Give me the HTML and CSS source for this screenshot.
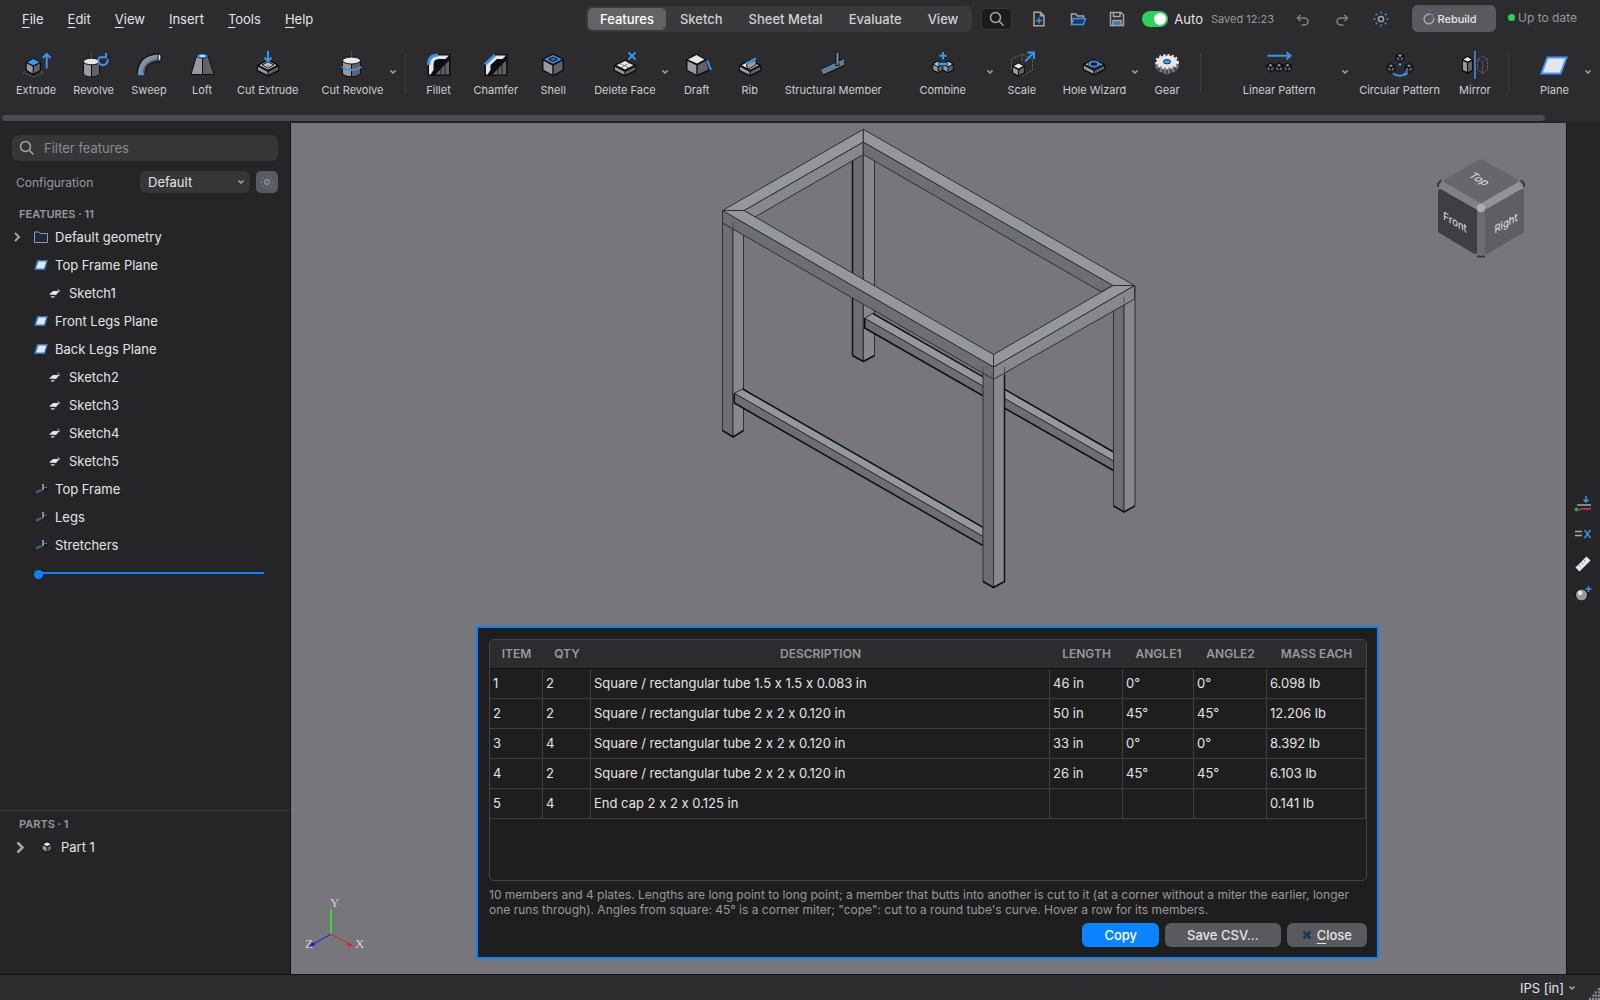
FILE: index.html
```html
<!DOCTYPE html>
<html lang="en">
<head>
  <meta charset="UTF-8">
  <title>Part Studio</title>
  <link rel="stylesheet" href="styles.css">
</head>
<body>

<!-- shared icon shapes -->
<svg class="symbols" aria-hidden="true">
  <symbol id="cube" viewBox="0 0 16 16">
    <path class="dark" d="M8 0 15 4v8l-7 4-7-4V4z"/>
    <path class="white" d="M8 1.500 13 4.300 8 7 3 4.300z"/>
    <path class="light" d="M2.200 5.600 7.400 8.400v5.800l-5.200-3z"/>
    <path class="mid" d="M13.800 5.600 8.600 8.400v5.800l5.200-3z"/>
  </symbol>
  <symbol id="cube-dim" viewBox="0 0 16 16">
    <path class="dark" d="M8 0 15 4v8l-7 4-7-4V4z"/>
    <path class="light" d="M8 2.500 11.500 4.500 8 6.500 4.500 4.500z"/>
    <path class="mid" d="M3 6.600 7 8.800v4.800L3 11.200z"/>
    <path class="mid" d="M13 6.600 9 8.800v4.800l4-2.400z"/>
  </symbol>
  <symbol id="plate" viewBox="0 0 24 18">
    <path class="dark" d="M12 0 24 6v6L12 18 0 12V6z"/>
    <path class="light" d="M1.500 7.800 11.400 12.800v3.200L1.500 11.200z"/>
    <path class="mid" d="M22.500 7.800 12.600 12.800v3.200l9.900-4.800z"/>
    <path class="white" d="M12 1.600 20.800 6 12 10.500 3.200 6z"/>
  </symbol>
  <symbol id="chevron-down" viewBox="0 0 8 6"><path class="line" d="M1.500 1.500 4 4l2.500-2.500"/></symbol>
  <symbol id="chevron-right" viewBox="0 0 8 12"><path class="line bold" d="M2 2l4 4-4 4"/></symbol>
  <symbol id="search" viewBox="0 0 16 16"><circle class="line" cx="6.500" cy="6.500" r="5"/><path class="line" d="M10.200 10.200 14.500 14.500"/></symbol>
  <symbol id="sun" viewBox="0 0 16 16">
    <circle class="line" cx="8" cy="8" r="2.600"/>
    <path class="blue-line" d="M8 .5v2M8 13.500v2M.5 8h2M13.500 8h2M2.700 2.700l1.400 1.400M11.900 11.900l1.400 1.400M2.700 13.300l1.400-1.400M11.900 4.100l1.400-1.400"/>
  </symbol>
  <symbol id="plane-small" viewBox="0 0 14 10">
    <path class="blue-dark" d="M3 0H14L11 10H0z"/><path class="white" d="M4.500 1.500H12.300L10 8.500H2z"/>
  </symbol>
  <symbol id="sketch-small" viewBox="0 0 14 12">
    <path class="white" d="M1 7.500 5 4h6.500L8 8z"/><path class="white" d="M3 9.200h4l-1 1.200H3z"/>
    <path class="blue-line" d="M9.500 2 12 4.500"/>
  </symbol>
  <symbol id="member-small" viewBox="0 0 14 12">
    <path class="bar-dark" d="M1 10.500 13 4.500"/><path class="post" d="M9 1v6"/><path class="beam thin" d="M2 10.500 9 7"/><path class="blue-line thin" d="M1.500 9.200 7 6.500M10 5l3-1"/>
  </symbol>
</svg>

<header class="top">
  <div class="titlebar">
    <nav class="menu">
      <a href="#"><u>F</u>ile</a>
      <a href="#"><u>E</u>dit</a>
      <a href="#"><u>V</u>iew</a>
      <a href="#"><u>I</u>nsert</a>
      <a href="#"><u>T</u>ools</a>
      <a href="#"><u>H</u>elp</a>
    </nav>

    <div class="tabs">
      <button class="tab active">Features</button>
      <button class="tab">Sketch</button>
      <button class="tab">Sheet Metal</button>
      <button class="tab">Evaluate</button>
      <button class="tab">View</button>
    </div>
    <button class="search-button" aria-label="Search"><svg width="16" height="16"><use href="#search"/></svg></button>

    <div class="quick">
      <button aria-label="New"><svg viewBox="0 0 16 16" width="16" height="16">
        <path class="line" d="M9.500 1.200H3v13.600h10V4.700zM9.500 1.200v3.500H13"/><path class="blue-line" d="M8 6.500v6M5 9.500h6"/>
      </svg></button>
      <button aria-label="Open"><svg viewBox="0 0 16 16" width="16" height="16">
        <path class="line" d="M1.500 13V3h4.300l1.500 2h6.200v2"/><path class="open-lid" d="M1.500 13.500 3.500 7.500h12l-2 6z"/>
      </svg></button>
      <button aria-label="Save"><svg viewBox="0 0 16 16" width="16" height="16">
        <path class="line" d="M1.500 1.500H12L14.500 4v10.500h-13zM4.500 1.500v4h6.500v-4"/><path class="line" d="M4 14.500V9.500h8v5"/><path class="blue-line" d="M5 11h6M5 13h6"/>
      </svg></button>
    </div>

    <label class="auto"><input type="checkbox" checked><span class="switch"></span>Auto</label>
    <span class="saved">Saved 12:23</span>

    <div class="quick">
      <button aria-label="Undo"><svg class="faded" viewBox="0 0 16 16" width="16" height="16"><path class="line" d="M5.500 4 2.500 7l3 3M2.500 7H9.500a3.500 3.500 0 0 1 0 7H6.500"/></svg></button>
      <button aria-label="Redo"><svg class="faded" viewBox="0 0 16 16" width="16" height="16"><path class="line" d="M10.500 4l3 3-3 3M13.500 7H6.500a3.500 3.500 0 0 0 0 7H9.500"/></svg></button>
      <button aria-label="Appearance"><svg width="16" height="16"><use href="#sun"/></svg></button>
    </div>

    <button class="rebuild"><svg viewBox="0 0 12 12" width="12" height="12"><path class="line" d="M7.500 1.500A4.800 4.800 0 1 0 10.600 5"/><path class="blue-line thin" d="M7 1.200l3 .3-.3 3"/></svg>Rebuild</button>
    <span class="state"><i></i>Up to date</span>
  </div>

  <div class="toolbar">
    <button class="tool"><svg viewBox="0 0 32 32">
      <path class="dash" d="M13.300 18 23.300 22.500 13.300 27 3.300 22.500z"/>
      <path class="dark" d="M13.300 8 21 12v9l-7.700 4.500L5.600 21v-9z"/>
      <path class="blue" d="M13.300 9 19.500 12.200 13.300 15.300 7.200 12.200z"/>
      <path class="light" d="M6.800 13.600 12.700 16.600v6.800L6.800 20z"/><path class="mid" d="M19.800 13.600 13.900 16.600v6.800L19.800 20z"/>
      <path class="blue-line w2" d="M26.700 18.300V4.500M22.800 8l3.900-4 3.900 4"/>
    </svg>Extrude</button>
    <button class="tool"><svg viewBox="0 0 32 32">
      <path class="axis" d="M13.500 2v7"/>
      <path class="light rim" d="M5.500 11.500v12a8 3.500 0 0 0 8 3.500V11.500z"/><path class="mid rim" d="M13.500 11.500V27a8 3.500 0 0 0 8-3.500v-12z"/>
      <ellipse class="white rim" cx="13.500" cy="11.500" rx="8" ry="3.300"/>
      <path class="blue-line w2" d="M21.500 7.200A4.700 4.700 0 1 0 29.500 9M21.500 7.200H28V3"/>
    </svg>Revolve</button>
    <button class="tool"><svg viewBox="0 0 32 32">
      <path class="pipe-edge" d="M8 24.500C8.500 14 14 8 27 7.500"/><path class="pipe" d="M8 23.500C8.500 14 14 8 26 7.500"/>
      <path class="pipe-low" d="M10.500 23C11 15.500 16.500 10.500 25.500 9.800"/>
      <path class="blue-line thin" d="M8 22C8.500 13 15 8 25 7.500"/>
      <ellipse class="white rim" cx="26.500" cy="7.500" rx="1.500" ry="3.300"/><ellipse class="blue" cx="8" cy="24" rx="3.600" ry="1.300"/>
    </svg>Sweep</button>
    <button class="tool"><svg viewBox="0 0 32 32">
      <path class="light rim" d="M10.500 6 5 24.500h11.500V6z"/><path class="mid rim" d="M16.500 6v18.500H28L22 6z"/>
      <ellipse class="hole-blue" cx="16.300" cy="6" rx="5.500" ry="2.200"/><ellipse class="white" cx="16.300" cy="6" rx="3" ry="1"/>
    </svg>Loft</button>
    <button class="tool"><svg viewBox="0 0 32 32">
      <use href="#plate" x="4.500" y="9" width="23" height="18"/>
      <path class="pocket" d="M16 12 22 15 16 18.200 10 15z"/><path class="light" d="M16 14.500 18.500 15.700 16 17 13.500 15.700z"/>
      <path class="blue-line w2" d="M16 .8v10M12.500 7.500l3.500 3.800 3.500-3.800"/>
    </svg>Cut Extrude</button>
    <button class="tool split"><svg viewBox="0 0 32 32">
      <path class="axis" d="M15.500 1v8"/>
      <path class="light rim" d="M6.500 10.500V23a9 3.700 0 0 0 9 3.700V10.500z"/><path class="mid rim" d="M15.500 10.500v16.200a9 3.700 0 0 0 9-3.700V10.500z"/>
      <ellipse class="white rim" cx="15.500" cy="10.500" rx="9" ry="3.500"/>
      <path class="blue-line w2" d="M6 16.500c3 4.500 16 4.500 19 0"/>
    </svg>Cut Revolve<svg class="arrow"><use href="#chevron-down"/></svg></button>
    <span class="divider"></span>
    <button class="tool"><svg viewBox="0 0 32 32">
      <path class="dark" d="M4.500 26V14Q5 4 15 4H27.500V26z"/><path class="mid" d="M12.500 24.500 26 10.500v14z"/><path class="edge" d="M18 24.500V17M22 24.500V13"/>
      <path class="white" d="M6 24.500V14Q7 5.500 15 5.500H26l-3.500 3.500H15.500Q10.500 9 10.500 15v5L7.500 24.500z"/>
      <path class="blue-line w3" d="M5.500 15Q5.500 5 15 5"/>
    </svg>Fillet</button>
    <button class="tool"><svg viewBox="0 0 32 32">
      <path class="dark" d="M4.500 26V14L15 4H27.500V26z"/><path class="mid" d="M12.500 24.500 26 10.500v14z"/><path class="edge" d="M18 24.500V17M22 24.500V13"/>
      <path class="white" d="M6 24.500V14.500L16 5.500H26l-3.500 3.500H17L10.500 15v5L7.500 24.500z"/>
      <path class="blue-line w3" d="M5 14.500 15 5"/>
    </svg>Chamfer</button>
    <button class="tool"><svg viewBox="0 0 32 32">
      <path class="dark" d="M16 3.500 27 9v11.500L16 26.500 5 20.500V9z"/>
      <path class="light" d="M6.500 10.800 15.300 15.400v9.200L6.500 19.800z"/><path class="mid" d="M25.500 10.800 16.700 15.400v9.200l8.800-4.800z"/>
      <path class="blue" d="M16 5 24.800 9.300 16 13.700 7.200 9.300z"/><path class="mid rim" d="M16 7 20.500 9.300 16 11.600 11.500 9.300z"/>
    </svg>Shell</button>
    <button class="tool split"><svg viewBox="0 0 32 32">
      <use href="#plate" x="4.500" y="9" width="23" height="18"/><path class="dash" d="M10 13l10 5M12 18l8-5"/>
      <path class="blue-line w2" d="M19.500 2.500l7 7M26.500 2.500l-7 7"/>
    </svg>Delete Face<svg class="arrow"><use href="#chevron-down"/></svg></button>
    <button class="tool"><svg viewBox="0 0 32 32">
      <path class="dark" d="M15 3.500 25.500 9.500 30 20 16.500 26.500 5 20.500V9.500z"/>
      <path class="light" d="M6.500 11 15.300 15.200v9.300L6.500 20z"/><path class="mid" d="M24.500 11 16.700 15.200v9.300L27.500 19.500z"/>
      <path class="white" d="M15.500 5 23.500 9.500 16 13.500 7 9.500z"/><path class="blue-line w2" d="M26 10.500 30 20"/>
    </svg>Draft</button>
    <button class="tool"><svg viewBox="0 0 32 32">
      <use href="#plate" x="4.500" y="9" width="23" height="18"/>
      <path class="light rim" d="M12.500 14 22 9.500v5.500L13.500 19.500z"/><path class="blue-line w2" d="M12 13.500 22 8.500"/>
    </svg>Rib</button>
    <button class="tool"><svg viewBox="0 0 32 32">
      <path class="beam-edge" d="M5 22.500 27.500 12"/><path class="beam" d="M5.500 22.800 27 12.600"/>
      <path class="post rim" d="M20.500 3v13"/><path class="post" d="M20.500 3v12"/>
      <path class="blue-line" d="M4.500 20.500 18 14M22 12.500l5-2.500"/>
    </svg>Structural Member</button>
    <button class="tool split tool-combine"><svg viewBox="0 0 32 32">
      <use href="#cube" x="4.500" y="10" width="13" height="14"/><use href="#cube" x="14.500" y="10" width="13" height="14"/>
      <ellipse class="hole-blue" cx="16" cy="14" rx="5.500" ry="1.800"/><path class="blue-line w2" d="M16 2v7.500M12.200 5.700h7.600"/>
    </svg>Combine<svg class="arrow"><use href="#chevron-down"/></svg></button>
    <button class="tool"><svg viewBox="0 0 32 32">
      <path class="dash" d="M16 4 26.500 9.500V20L16 26.500 5.500 20V9.500zM16 15V4"/>
      <use href="#cube" x="5" y="12" width="15" height="15"/>
      <path class="blue-line w2" d="M19 11.500 28 2.500M21.500 2.500H28V9"/>
    </svg>Scale</button>
    <button class="tool split"><svg viewBox="0 0 32 32">
      <use href="#plate" x="4.500" y="8" width="23" height="18"/><ellipse class="hole-blue" cx="16" cy="14" rx="6" ry="3.500"/><ellipse class="dark" cx="16" cy="14" rx="3.300" ry="1.700"/>
    </svg>Hole Wizard<svg class="arrow"><use href="#chevron-down"/></svg></button>
    <button class="tool"><svg viewBox="0 0 32 32">
      <path class="gear-side" d="M4.500 12v5.500L8 21.500l8 3 8-3 3.500-4V12z"/><path class="edge" d="M8 15v6M12 17v6.500M16 18v6M20 17v6.500M24 15v6"/>
      <ellipse class="gear-teeth" cx="16" cy="11.700" rx="10.500" ry="6.200"/><ellipse class="white" cx="16" cy="11.700" rx="9.500" ry="5.400"/>
      <ellipse class="hole-blue" cx="16" cy="11.700" rx="3.600" ry="2.200"/>
    </svg>Gear</button>
    <span class="divider"></span>
    <button class="tool split tool-linear"><svg viewBox="0 0 32 32">
      <path class="blue-line w2" d="M4.500 5.700H27M23.500 2.200l4 3.500-4 3.500"/>
      <use href="#cube-dim" x="2.500" y="12.500" width="10" height="10"/><use href="#cube-dim" x="11" y="12.500" width="10" height="10"/><use href="#cube-dim" x="19.500" y="12.500" width="10" height="10"/>
      <circle class="blue" cx="7.500" cy="15.500" r="1"/>
    </svg>Linear Pattern<svg class="arrow"><use href="#chevron-down"/></svg></button>
    <button class="tool"><svg viewBox="0 0 32 32">
      <use href="#cube-dim" x="11" y="2.500" width="10" height="10"/><use href="#cube-dim" x="2" y="13" width="10" height="10"/><use href="#cube-dim" x="20" y="13" width="10" height="10"/>
      <circle class="blue" cx="16" cy="6" r="1"/><circle class="blue" cx="16" cy="14.500" r="1.300"/>
      <path class="blue-line w2" d="M9 23.500c4 3 10 3 14 0M22.500 20.500v3.500h-3"/>
    </svg>Circular Pattern</button>
    <button class="tool"><svg viewBox="0 0 32 32">
      <path class="dark" d="M8.500 5.500 14 9v12l-5.500 3.500L3 21V9z"/><path class="light" d="M4 11 8 13v9l-4-2z"/><path class="mid" d="M13 11 9 13v9l4-2z"/><path class="white" d="M8.500 7 12.500 9.500l-4 2-4-2z"/>
      <path class="dash" d="M23.500 6.500 28.500 9v11l-5 3.500-5-3.500V9zM19 9.500l4.500 2.500 4.500-2.500M23.500 12v11"/>
      <path class="blue-line" d="M16 1v28"/>
    </svg>Mirror</button>
    <span class="divider"></span>
    <button class="tool split tool-plane"><svg viewBox="0 0 32 32">
      <path class="plane-icon" d="M9.500 7.500H28.500L22.500 23.500H3.500z"/>
    </svg>Plane<svg class="arrow"><use href="#chevron-down"/></svg></button>
  </div>
  <div class="scroll"></div>
</header>

<div class="workspace">
  <aside class="sidebar">
    <section class="features">
      <label class="filter"><svg width="16" height="16"><use href="#search"/></svg><input type="text" placeholder="Filter features" aria-label="Filter features"></label>
      <div class="config">
        <label for="configuration">Configuration</label>
        <span class="select"><select id="configuration"><option>Default</option></select><svg><use href="#chevron-down"/></svg></span>
        <button aria-label="Configuration settings"><svg class="faded" width="14" height="14"><use href="#sun"/></svg></button>
      </div>
      <h2>FEATURES · 11</h2>
      <ul class="tree">
        <li><svg class="expand"><use href="#chevron-right"/></svg><svg class="icon" viewBox="0 0 14 12"><path class="folder" d="M.5 11.500V1H5l1.200 1.500h7.300v9z"/></svg>Default geometry</li>
        <li><svg class="icon"><use href="#plane-small"/></svg>Top Frame Plane</li>
        <li class="nested"><svg class="icon"><use href="#sketch-small"/></svg>Sketch1</li>
        <li><svg class="icon"><use href="#plane-small"/></svg>Front Legs Plane</li>
        <li><svg class="icon"><use href="#plane-small"/></svg>Back Legs Plane</li>
        <li class="nested"><svg class="icon"><use href="#sketch-small"/></svg>Sketch2</li>
        <li class="nested"><svg class="icon"><use href="#sketch-small"/></svg>Sketch3</li>
        <li class="nested"><svg class="icon"><use href="#sketch-small"/></svg>Sketch4</li>
        <li class="nested"><svg class="icon"><use href="#sketch-small"/></svg>Sketch5</li>
        <li><svg class="icon"><use href="#member-small"/></svg>Top Frame</li>
        <li><svg class="icon"><use href="#member-small"/></svg>Legs</li>
        <li><svg class="icon"><use href="#member-small"/></svg>Stretchers</li>
      </ul>
      <div class="rollback"></div>
    </section>
    <section class="parts">
      <h2>PARTS · 1</h2>
      <div class="part"><svg class="part-expand"><use href="#chevron-right"/></svg><svg class="part-icon"><use href="#cube"/></svg>Part 1</div>
    </section>
  </aside>

  <main class="viewport">
    <!-- welded table frame, drawn back to front -->
    <svg class="model" viewBox="712 123 433 477">
      <path class="side-left" d="M852.500 150V355.500L863.300 361.500V150z"/>
      <path class="side-right" d="M863.300 150V361.500L874.500 355.500V150z"/>
      <path class="side-top" d="M864.700 318.300 872.700 313.300 1113.500 452V461z"/>
      <path class="side-left" d="M864.700 318.300 1113.500 461V470.500L864.700 328z"/>
      <path class="heavy" d="M852.500 160V355.500L863.300 361.500 874.500 355.500M872.700 313.300 1113.500 452M864.700 318.300V328L1113.500 470.500"/>

      <path class="side-right" d="M863.300 142V154.500L755 217 744 210.500z"/>
      <path class="side-left" d="M863.300 142V154.500L1101 291.700 1113 285.500z"/>
      <path class="side-top" d="M722.500 210.500 863.300 129.300V142L744 210.500z"/>
      <path class="side-top" d="M863.300 129.300 1134.500 285.500H1113L863.300 142z"/>

      <path class="side-left" d="M722.500 222V430.500L733 437V222z"/>
      <path class="side-right" d="M733 222V437L743.500 430.500V222z"/>
      <path class="side-left" d="M1113.500 290V506L1124 512V290z"/>
      <path class="side-right" d="M1124 290V512L1135 506V285.500z"/>
      <path class="heavy" d="M722.500 430.500 733 437 743.500 430.500M1113.500 506 1124 512 1135 506"/>

      <path class="side-top" d="M734.300 393.300 742.700 389 983 527.300V536.500z"/>
      <path class="side-left" d="M734.300 393.300 983 536.500V545.700L734.300 403z"/>
      <path class="heavy" d="M742.700 389 983 527.300M734.300 393.300V403L983 545.700"/>

      <path class="side-left" d="M983 367V581.500L993.500 587.500V367z"/>
      <path class="side-right" d="M993.500 367V587.500L1004.500 581.500V367z"/>
      <path class="heavy" d="M983 581.500 993.500 587.500 1004.500 581.500V373"/>

      <path class="side-left" d="M722.500 210.500 993.500 367V379.300L722.500 223z"/>
      <path class="side-right" d="M993.500 367 1134.500 285.500V299L993.500 379.300z"/>
      <path class="side-top" d="M722.500 210.500H744L993.500 354.500V367z"/>
      <path class="side-top" d="M1134.500 285.500H1113L993.500 354.500V367z"/>
      <path class="tick" d="M733 222V229M983 367V379M1004.500 367V375M1124 297V303"/>
    </svg>

    <svg class="view-cube" viewBox="1430 150 102 112">
      <path class="cube-tab" d="M1438 187v-3l3-4M1521 180l3 4v3M1477 256.500h8"/>
      <path class="cube-band-left" d="M1438 188 1444 181 1481 203V212L1476 211z"/>
      <path class="cube-band-right" d="M1524 188 1518 181 1481 203V212L1485 211z"/>
      <path class="cube-band-mid" d="M1476 208H1486V254L1481 256 1476 254z"/>
      <path class="cube-top" d="M1481 161 1516 181 1481 201 1446 181z"/>
      <path class="cube-front" d="M1440 191 1475 211V252L1440 231z"/>
      <path class="cube-right" d="M1522 191 1487 211V252L1522 231z"/>
      <circle cx="1481" cy="208" r="4.300"/>
      <text transform="matrix(.87 .5 -.87 .5 1476 181)">Top</text>
      <text transform="matrix(.87 .5 0 1 1455 226)">Front</text>
      <text transform="matrix(.87 -.5 0 1 1506 227)">Right</text>
    </svg>

    <svg class="triad" viewBox="301 891 70 60">
      <path class="axis-y" d="M331 934V909"/>
      <path class="axis-x" d="M331 934 353 946.500"/><path class="axis-x fat" d="M347.500 943.500 351 945.500"/>
      <path class="axis-z" d="M331 934 309 946.500"/><path class="axis-z fat" d="M314.500 943.500 311 945.500"/>
      <text x="330" y="907">Y</text><text x="355" y="948">X</text><text x="305" y="948">Z</text>
    </svg>

    <section class="cutlist">
      <div class="table-frame">
        <table>
          <colgroup><col class="c-item"><col class="c-qty"><col><col class="c-length"><col class="c-angle1"><col class="c-length"><col class="c-mass"></colgroup>
          <thead>
            <tr><th>ITEM</th><th>QTY</th><th>DESCRIPTION</th><th>LENGTH</th><th>ANGLE1</th><th>ANGLE2</th><th>MASS EACH</th></tr>
          </thead>
          <tbody>
            <tr><td>1</td><td>2</td><td>Square / rectangular tube 1.5 x 1.5 x 0.083 in</td><td>46 in</td><td>0°</td><td>0°</td><td>6.098 lb</td></tr>
            <tr><td>2</td><td>2</td><td>Square / rectangular tube 2 x 2 x 0.120 in</td><td>50 in</td><td>45°</td><td>45°</td><td>12.206 lb</td></tr>
            <tr><td>3</td><td>4</td><td>Square / rectangular tube 2 x 2 x 0.120 in</td><td>33 in</td><td>0°</td><td>0°</td><td>8.392 lb</td></tr>
            <tr><td>4</td><td>2</td><td>Square / rectangular tube 2 x 2 x 0.120 in</td><td>26 in</td><td>45°</td><td>45°</td><td>6.103 lb</td></tr>
            <tr><td>5</td><td>4</td><td>End cap 2 x 2 x 0.125 in</td><td></td><td></td><td></td><td>0.141 lb</td></tr>
          </tbody>
        </table>
      </div>
      <p>10 members and 4 plates. Lengths are long point to long point; a member that butts into another is cut to it (at a corner without a miter the earlier, longer one runs through). Angles from square: 45° is a corner miter; "cope": cut to a round tube's curve. Hover a row for its members.</p>
      <div class="actions">
        <button class="primary">Copy</button>
        <button>Save CSV...</button>
        <button class="close"><svg viewBox="0 0 10 10" width="10" height="10"><path d="M1.500 1.500l7 7M8.500 1.500l-7 7"/></svg><span><u>C</u>lose</span></button>
      </div>
    </section>
  </main>

  <nav class="rail">
    <button aria-label="Constraints"><svg viewBox="0 0 18 18"><path class="blue-line" d="M12 1v6M9.500 4.500 12 7l2.500-2.500"/><path class="line" d="M3 10h14"/><path class="red-line" d="M5 15.500c3-4 6 0 12-2"/><circle class="green" cx="2.500" cy="14.500" r="2"/></svg></button>
    <button aria-label="Equations"><svg viewBox="0 0 18 18"><path class="line" d="M1 6.500h7M1 10.500h7"/><path class="blue-line" d="M10.500 5l6 8M16.500 5l-6 8"/></svg></button>
    <button aria-label="Measure"><svg viewBox="0 0 18 18"><path class="white" d="M1.500 12.500 12.500 1.500l4 4L5.500 16.500z"/><path class="blue-line thin" d="M5 10l1.500 1.500M7.500 7.500 9 9M10 5l1.500 1.500"/></svg></button>
    <button aria-label="Material"><svg viewBox="0 0 18 18"><circle class="light rim" cx="7.500" cy="10" r="6"/><circle class="white" cx="6" cy="8" r="2.300"/><path class="blue-line" d="M14.500 1v6M11.500 4h6"/></svg></button>
  </nav>
</div>

<footer class="status">
  <button>IPS [in]<svg><use href="#chevron-down"/></svg></button>
  <svg class="grip" viewBox="0 0 10 11"><path d="M8 1h2M5 4h2M8 4h2M3 7h2M5.500 7h2M8 7h2M0 10h2M2.700 10h2M5.400 10h2M8 10h2"/></svg>
</footer>

</body>
</html>
```
FILE: styles.css
```css
* {
  box-sizing: border-box;
  margin: 0;
  padding: 0;
}

body {
  display: flex;
  flex-direction: column;
  height: 100vh;
  overflow: hidden;
  font-family: Inter, "Liberation Sans", sans-serif;
  font-size: 13px;
  font-variant-ligatures: no-contextual;
  color: #e4e4e6;
  background: #252527;
}

button, input, select {
  font: inherit;
  color: inherit;
  background: none;
  border: none;
}

svg { flex: none; }
a { color: inherit; text-decoration: none; }
u { text-underline-offset: 3px; }

/* icon paint */
.symbols { position: absolute; width: 0; height: 0; }
.dark { fill: #0f0f10; }
.white { fill: #e6e6ea; }
.light { fill: #9a9a9e; }
.mid { fill: #626266; }
.blue { fill: #3a9bfa; }
.blue-dark { fill: #2f78c4; }
.green { fill: #30a050; }
.rim { stroke: #0f0f10; stroke-width: 1; }
.edge { fill: none; stroke: #1c1c1e; }
.line { fill: none; stroke: #a6a6aa; stroke-width: 1.5; }
.line.bold { stroke-width: 2; }
.blue-line { fill: none; stroke: #3a94ec; stroke-width: 1.5; }
.blue-line.w2 { stroke-width: 2; }
.blue-line.w3 { stroke-width: 3; }
.blue-line.thin { stroke-width: 1; }
.red-line { fill: none; stroke: #c04848; stroke-width: 1.5; }
.axis { fill: none; stroke: #4c4c50; }
.dash { fill: none; stroke: #5c5c60; stroke-dasharray: 3 1; }
.faded { opacity: 0.7; }
.pocket { fill: #c9c9cc; stroke: #0f0f10; }
.hole-blue { fill: #3a9bfa; stroke: #16365c; }
.pipe-edge { fill: none; stroke: #0f0f10; stroke-width: 9; }
.pipe { fill: none; stroke: #939397; stroke-width: 6; }
.pipe-low { fill: none; stroke: #5c5c60; stroke-width: 2; }
.bar-dark { stroke: #0f0f10; stroke-width: 3; }
.beam-edge { stroke: #0f0f10; stroke-width: 7; }
.beam { stroke: #77777b; stroke-width: 4; }
.beam.thin { stroke-width: 1; }
.post { stroke: #8c8c90; stroke-width: 2; }
.post.rim { stroke: #0f0f10; stroke-width: 4; }
.gear-side { fill: #77777b; }
.gear-teeth { fill: #e6e6ea; stroke: #e6e6ea; stroke-width: 3; stroke-dasharray: 2 2; }
.plane-icon { fill: #e6e6ea; stroke: #3a9bfa; stroke-width: 2; }
.open-lid { fill: #1c3d63; stroke: #3a94ec; stroke-width: 1.5; }
.folder { fill: #1a2a44; stroke: #9a9a9e; }

/* top */
.top { background: #2c2c2e; }

.titlebar {
  display: flex;
  align-items: center;
  height: 37px;
  padding-right: 23px;
}

.menu {
  display: flex;
  flex: 1;
  gap: 24px;
  padding-left: 22px;
}

.tabs {
  display: flex;
  gap: 2px;
  padding: 2px;
  border-radius: 6px;
  background: #3a3a3c;
}

.tab {
  height: 22px;
  padding: 0 12px;
  border-radius: 5px;
  color: #d0d0d2;
  font-weight: 500;
}

.tab.active { background: #636366; color: #fff; }

.search-button {
  display: grid;
  place-items: center;
  width: 31px;
  height: 22px;
  margin: 0 7px 0 9px;
  border: 1px solid #3a3a3c;
  border-radius: 5px;
  background: #1c1c1e;
}

.quick { display: flex; }
.quick button { display: grid; place-items: center; width: 39px; height: 24px; }

.auto {
  display: flex;
  align-items: center;
  gap: 6px;
  margin: 0 8px 0 6px;
}

.auto input { position: absolute; opacity: 0; }

.switch {
  width: 26px;
  height: 16px;
  padding: 2px;
  border-radius: 8px;
  background: #30d158;
}

.switch::after {
  content: "";
  display: block;
  width: 12px;
  height: 12px;
  margin-left: auto;
  border-radius: 50%;
  background: #fff;
}

.saved { margin-right: 9px; font-size: 11px; color: #98989d; }

.rebuild {
  display: flex;
  align-items: center;
  justify-content: center;
  gap: 2px;
  width: 84px;
  height: 27px;
  margin: 0 12px;
  padding-right: 8px;
  border-radius: 6px;
  background: #5a5a5e;
  font-size: 11px;
  font-weight: 500;
}

.state {
  display: flex;
  align-items: center;
  gap: 3px;
  padding-bottom: 2px;
  font-size: 12px;
  color: #98989d;
}

.state i { width: 7px; height: 7px; border-radius: 50%; background: #30d158; }

.toolbar {
  display: flex;
  gap: 1px;
  height: 78px;
  padding: 8px 7px 0 8px;
}

.tool {
  position: relative;
  display: flex;
  flex: none;
  flex-direction: column;
  align-items: center;
  height: 60px;
  min-width: 52px;
  padding: 5px 8px 0;
  font-size: 11px;
  line-height: 16px;
  color: #cdcdd0;
}

.tool > svg { width: 32px; height: 32px; }
.tool.split { padding: 5px 14px 0; }
.tool > svg.arrow { position: absolute; right: 1px; top: 24px; width: 8px; height: 6px; }
.tool.tool-combine { min-width: 104px; }
.tool.tool-linear { min-width: 142px; }
.tool.tool-plane { min-width: 77px; }

.divider {
  flex: none;
  width: 1px;
  height: 40px;
  margin: 8px 6px 0;
  background: #3d3d40;
}

.scroll {
  height: 6px;
  margin: 0 55px 0 2px;
  border-radius: 3px;
  background: #4c4c50;
}

.workspace {
  display: flex;
  flex: 1;
  min-height: 0;
  border-top: 2px solid #242426;
}

/* sidebar */
.sidebar {
  display: flex;
  flex-direction: column;
  width: 291px;
  border-right: 1px solid #121213;
}

.features { flex: 1; padding: 12px 12px 0; }

.filter {
  display: flex;
  align-items: center;
  gap: 9px;
  height: 26px;
  padding: 0 7px;
  border-radius: 6px;
  background: #363638;
}

.filter input { flex: 1; min-width: 0; }
.filter input::placeholder { color: #8a8a8e; }

.config {
  display: flex;
  align-items: center;
  gap: 6px;
  padding: 10px 0 0 4px;
  font-size: 12px;
  color: #98989d;
}

.config label { flex: 1; }

.select {
  display: flex;
  align-items: center;
  width: 110px;
  height: 22px;
  padding: 0 5px 0 8px;
  border-radius: 6px;
  background: #363638;
  color: #e4e4e6;
  font-size: 13px;
}

.select select { flex: 1; appearance: none; }
.select svg, .status button svg { width: 8px; height: 6px; }

.config button {
  display: grid;
  place-items: center;
  width: 22px;
  height: 22px;
  border-radius: 5px;
  background: #5a5a5e;
}

h2 {
  padding-left: 7px;
  font-size: 11px;
  font-weight: 600;
  line-height: 16px;
  color: #98989d;
}

.features h2 { margin: 13px 0 1px; }

.tree { list-style: none; }

.tree li {
  display: flex;
  align-items: center;
  gap: 7px;
  height: 28px;
  padding-left: 22px;
}

.tree li.nested { padding-left: 36px; }
.tree .icon { width: 14px; height: 12px; }
.tree .expand { width: 8px; height: 12px; margin: 0 6px 0 -21px; }

.rollback {
  position: relative;
  height: 2px;
  margin: 13px 14px 0 26px;
  background: #0a84ff;
}

.rollback::before {
  content: "";
  position: absolute;
  left: -4px;
  top: -2px;
  width: 9px;
  height: 9px;
  border-radius: 50%;
  background: #0a84ff;
}

.parts {
  height: 164px;
  padding: 5px 12px;
  border-top: 1px solid #3a3a3c;
}

.part { display: flex; align-items: center; height: 30px; padding-left: 3px; }
.part-expand { width: 10px; height: 15px; margin-right: 16px; }
.part-icon { width: 12px; height: 12px; margin-right: 8px; }

/* viewport */
.viewport {
  position: relative;
  flex: 1;
  background: #77767b;
}

.model { display: block; width: 433px; height: 477px; margin: 0 auto; }
.model path { stroke: #303033; stroke-width: 1; stroke-linejoin: round; }
.side-left { fill: #6d6e72; }
.side-right { fill: #87888c; }
.side-top { fill: #94979b; }
.model .heavy { fill: none; stroke: #121214; stroke-width: 1.5; }
.model .tick { fill: none; stroke: #4c4d50; }

.view-cube {
  position: absolute;
  top: 27px;
  right: 34px;
  width: 102px;
  height: 112px;
}

.view-cube text { font-size: 11px; fill: #e4e4e6; text-anchor: middle; }
.view-cube circle { fill: #adaeb1; }
.cube-tab { fill: none; stroke: #38383b; stroke-width: 2; }
.cube-band-left { fill: #808186; }
.cube-band-right { fill: #929397; }
.cube-band-mid { fill: #6c6d72; }
.cube-top, .cube-front, .cube-right { stroke-width: 4; stroke-linejoin: round; }
.cube-top { fill: #65676d; stroke: #65676d; }
.cube-front { fill: #3e3f43; stroke: #3e3f43; }
.cube-right { fill: #5e5f64; stroke: #5e5f64; }

.triad {
  position: absolute;
  left: 10px;
  bottom: 23px;
  width: 70px;
  height: 60px;
}

.triad text { font-family: "Liberation Serif", serif; font-size: 13px; fill: #d4d4d6; }
.axis-x { stroke: #e82020; }
.axis-y { stroke: #38d838; stroke-width: 2; }
.axis-z { stroke: #1818e8; }
.fat { stroke-width: 3; }

/* cut list panel */
.cutlist {
  position: absolute;
  right: 187px;
  bottom: 15px;
  width: 903px;
  max-width: 96%;
  padding: 11px 10px 10px 11px;
  border: 2px solid #0a84ff;
  background: #1e1e1e;
}

.table-frame {
  height: 242px;
  overflow: hidden;
  border: 1px solid #444446;
  border-radius: 5px;
}

table {
  width: 100%;
  table-layout: fixed;
  border-collapse: separate;
  border-spacing: 0;
}

.c-item { width: 53px; }
.c-qty { width: 48px; }
.c-length { width: 73px; }
.c-angle1 { width: 71px; }
.c-mass { width: 99px; }

th {
  height: 29px;
  padding-bottom: 2px;
  background: #2c2c2e;
  border-bottom: 1px solid #121213;
  font-size: 12px;
  font-weight: 600;
  color: #98989d;
}

td {
  height: 30px;
  padding: 0 3px 2px;
  border-right: 1px solid #3f3f42;
  border-bottom: 1px solid #3f3f42;
}

.cutlist p {
  margin: 6px 0;
  font-size: 12px;
  line-height: 15px;
  color: #98989d;
}

.actions { display: flex; justify-content: flex-end; gap: 6px; }

.actions button {
  display: flex;
  align-items: center;
  gap: 5px;
  height: 24px;
  padding: 0 22px;
  border-radius: 6px;
  background: #5a5a5e;
  font-weight: 500;
}

.actions .primary { background: #0a84ff; color: #fff; }
.actions .close { padding: 0 15px; }
.actions path { stroke: #16365c; stroke-width: 2.5; }

.rail {
  display: flex;
  flex-direction: column;
  align-items: center;
  justify-content: center;
  gap: 12px;
  width: 34px;
  padding-right: 2px;
  border-left: 1px solid #121213;
}

.rail button, .rail svg { display: block; width: 18px; height: 18px; }

.status {
  display: flex;
  align-items: center;
  justify-content: flex-end;
  height: 26px;
  border-top: 1px solid #121213;
  background: #2c2c2e;
}

.status button { display: flex; align-items: center; gap: 4px; }
.grip { align-self: flex-end; width: 11px; height: 12px; margin-left: 13px; }
.grip path { stroke: #8a8a8e; stroke-width: 2; }
```
